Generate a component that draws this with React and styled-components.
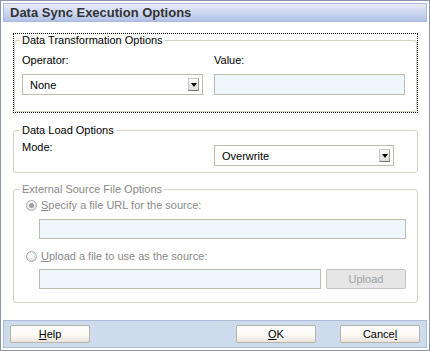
import styled, { createGlobalStyle } from "styled-components";

const GlobalStyle = createGlobalStyle`
  body {
    margin: 0;
    font-family: "Liberation Sans", Arial, sans-serif;
    font-size: 11px;
    background: #fff;
  }
`;

const Window = styled.div`
  width: 430px;
  height: 351px;
  box-sizing: border-box;
  border: 1px solid #8796a9;
  padding: 2px;
  background: #fff;
  display: flex;
  flex-direction: column;
`;

const TitleBar = styled.div`
  height: 19px;
  box-sizing: border-box;
  border: 1px solid #a9b8de;
  background: linear-gradient(#e6ecf8, #cdd8f0 50%, #b2c2e8);
  padding-left: 6px;
  font: bold 13px "Liberation Sans", Arial, sans-serif;
  line-height: 17px;
  color: #333;
`;

const Body = styled.div`
  display: flex;
  flex-direction: column;
  padding: 11px 9px 0 10px;
`;

const FocusFrame = styled.div`
  border: 1px dotted #000;
`;

const Group = styled.fieldset`
  margin: ${(p) => p.$top || 0}px 0 0;
  min-width: 0;
  border: 1px solid #d3d3c6;
  border-radius: 3px;
  padding: ${(p) => p.$pad};
`;

const Legend = styled.legend`
  padding: 0 2px;
  margin-left: -2px;
  line-height: 13px;
  color: ${(p) => (p.$disabled ? "#8a8a8a" : "#000")};
`;

const FieldGrid = styled.div`
  display: grid;
  grid-template-columns: 181px 191px;
  column-gap: 11px;
  row-gap: 7px;
  align-items: start;
`;

const Label = styled.div`
  line-height: 13px;
  color: #000;
`;

const Select = styled.div`
  width: ${(p) => p.$w}px;
  height: 21px;
  margin-top: ${(p) => p.$top || 0}px;
  box-sizing: border-box;
  border: 1px solid #bdbdae;
  background: #fff;
  display: flex;
  align-items: center;
  padding: 0 3px 0 7px;
`;

const SelectValue = styled.span`
  flex: 1;
`;

const DropButton = styled.span`
  width: 11px;
  height: 13px;
  box-sizing: border-box;
  border: 1px solid #c9c9c9;
  border-right-color: #9c9c9c;
  border-bottom-color: #707070;
  background: linear-gradient(#fefefe, #dedede);
  display: flex;
  align-items: center;
  justify-content: center;

  &::after {
    content: "";
    border-left: 3px solid transparent;
    border-right: 3px solid transparent;
    border-top: 4px solid #000;
  }
`;

const TextInput = styled.div`
  width: ${(p) => p.$w}px;
  height: ${(p) => p.$h || 21}px;
  box-sizing: border-box;
  border: 1px solid #bdbdae;
  background: #eef6fe;
`;

const SourceList = styled.div`
  display: flex;
  flex-direction: column;
`;

const RadioRow = styled.div`
  display: flex;
  align-items: center;
  gap: 4px;
  height: 14px;
  margin-top: ${(p) => p.$top || 0}px;
  padding-left: 4px;
  color: #8a8a8a;
`;

const Radio = styled.span`
  width: 11px;
  height: 11px;
  box-sizing: border-box;
  border-radius: 50%;
  border: 1px solid #a8a8a8;
  background: radial-gradient(circle at 40% 35%, #ffffff, #dadad6);
  display: flex;
  align-items: center;
  justify-content: center;

  &::after {
    content: "";
    display: ${(p) => (p.$checked ? "block" : "none")};
    width: 5px;
    height: 5px;
    border-radius: 50%;
    background: #9c9c9c;
  }
`;

const Key = styled.u`
  text-decoration: underline;
`;

const InputRow = styled.div`
  display: flex;
  gap: 5px;
  margin-top: ${(p) => p.$top || 0}px;
  padding-left: 17px;
`;

const Footer = styled.div`
  margin-top: auto;
  height: 28px;
  box-sizing: border-box;
  border: 1px solid #adbcd9;
  background: #cedbed;
  display: flex;
  align-items: center;
  padding: 0 6px;
`;

const Spacer = styled.div`
  flex: 1;
`;

const Button = styled.button`
  width: 80px;
  height: ${(p) => (p.disabled ? 20 : 18)}px;
  padding: 0;
  margin-left: ${(p) => p.$gap || 0}px;
  font: 11px "Liberation Sans", Arial, sans-serif;
  color: ${(p) => (p.disabled ? "#a2a2a2" : "#000")};
  border: 1px solid ${(p) => (p.disabled ? "#c2c2c2" : "#b7b3a6")};
  border-radius: 2px;
  background: ${(p) =>
    p.disabled
      ? "#e6e6e6"
      : "linear-gradient(#ffffff, #fbfaf6 55%, #e9e4db)"};
`;

const App = () => {
  return (
    <>
      <GlobalStyle />
      <Window>
        <TitleBar>Data Sync Execution Options</TitleBar>
        <Body>
          <FocusFrame>
            <Group $pad="7px 10px 16px 7px">
              <Legend>Data Transformation Options</Legend>
              <FieldGrid>
                <Label>Operator:</Label>
                <Label>Value:</Label>
                <Select $w={181}>
                  <SelectValue>None</SelectValue>
                  <DropButton />
                </Select>
                <TextInput $w={191} />
              </FieldGrid>
            </Group>
          </FocusFrame>

          <Group $top={11} $pad="4px 10px 6px 8px">
            <Legend>Data Load Options</Legend>
            <FieldGrid>
              <Label>Mode:</Label>
              <Select $w={180} $top={4}>
                <SelectValue>Overwrite</SelectValue>
                <DropButton />
              </Select>
            </FieldGrid>
          </Group>

          <Group $top={10} $pad="2px 10px 13px 8px">
            <Legend $disabled>External Source File Options</Legend>
            <SourceList>
              <RadioRow>
                <Radio $checked />
                <span>
                  <Key>S</Key>pecify a file URL for the source:
                </span>
              </RadioRow>
              <InputRow $top={7}>
                <TextInput $w={367} $h={20} />
              </InputRow>
              <RadioRow $top={10}>
                <Radio />
                <span>
                  <Key>U</Key>pload a file to use as the source:
                </span>
              </RadioRow>
              <InputRow $top={6}>
                <TextInput $w={282} $h={20} />
                <Button disabled>Upload</Button>
              </InputRow>
            </SourceList>
          </Group>
        </Body>

        <Footer>
          <Button>
            <Key>H</Key>elp
          </Button>
          <Spacer />
          <Button>
            <Key>O</Key>K
          </Button>
          <Button $gap={24}>
            Cance<Key>l</Key>
          </Button>
        </Footer>
      </Window>
    </>
  );
};

export default App;
